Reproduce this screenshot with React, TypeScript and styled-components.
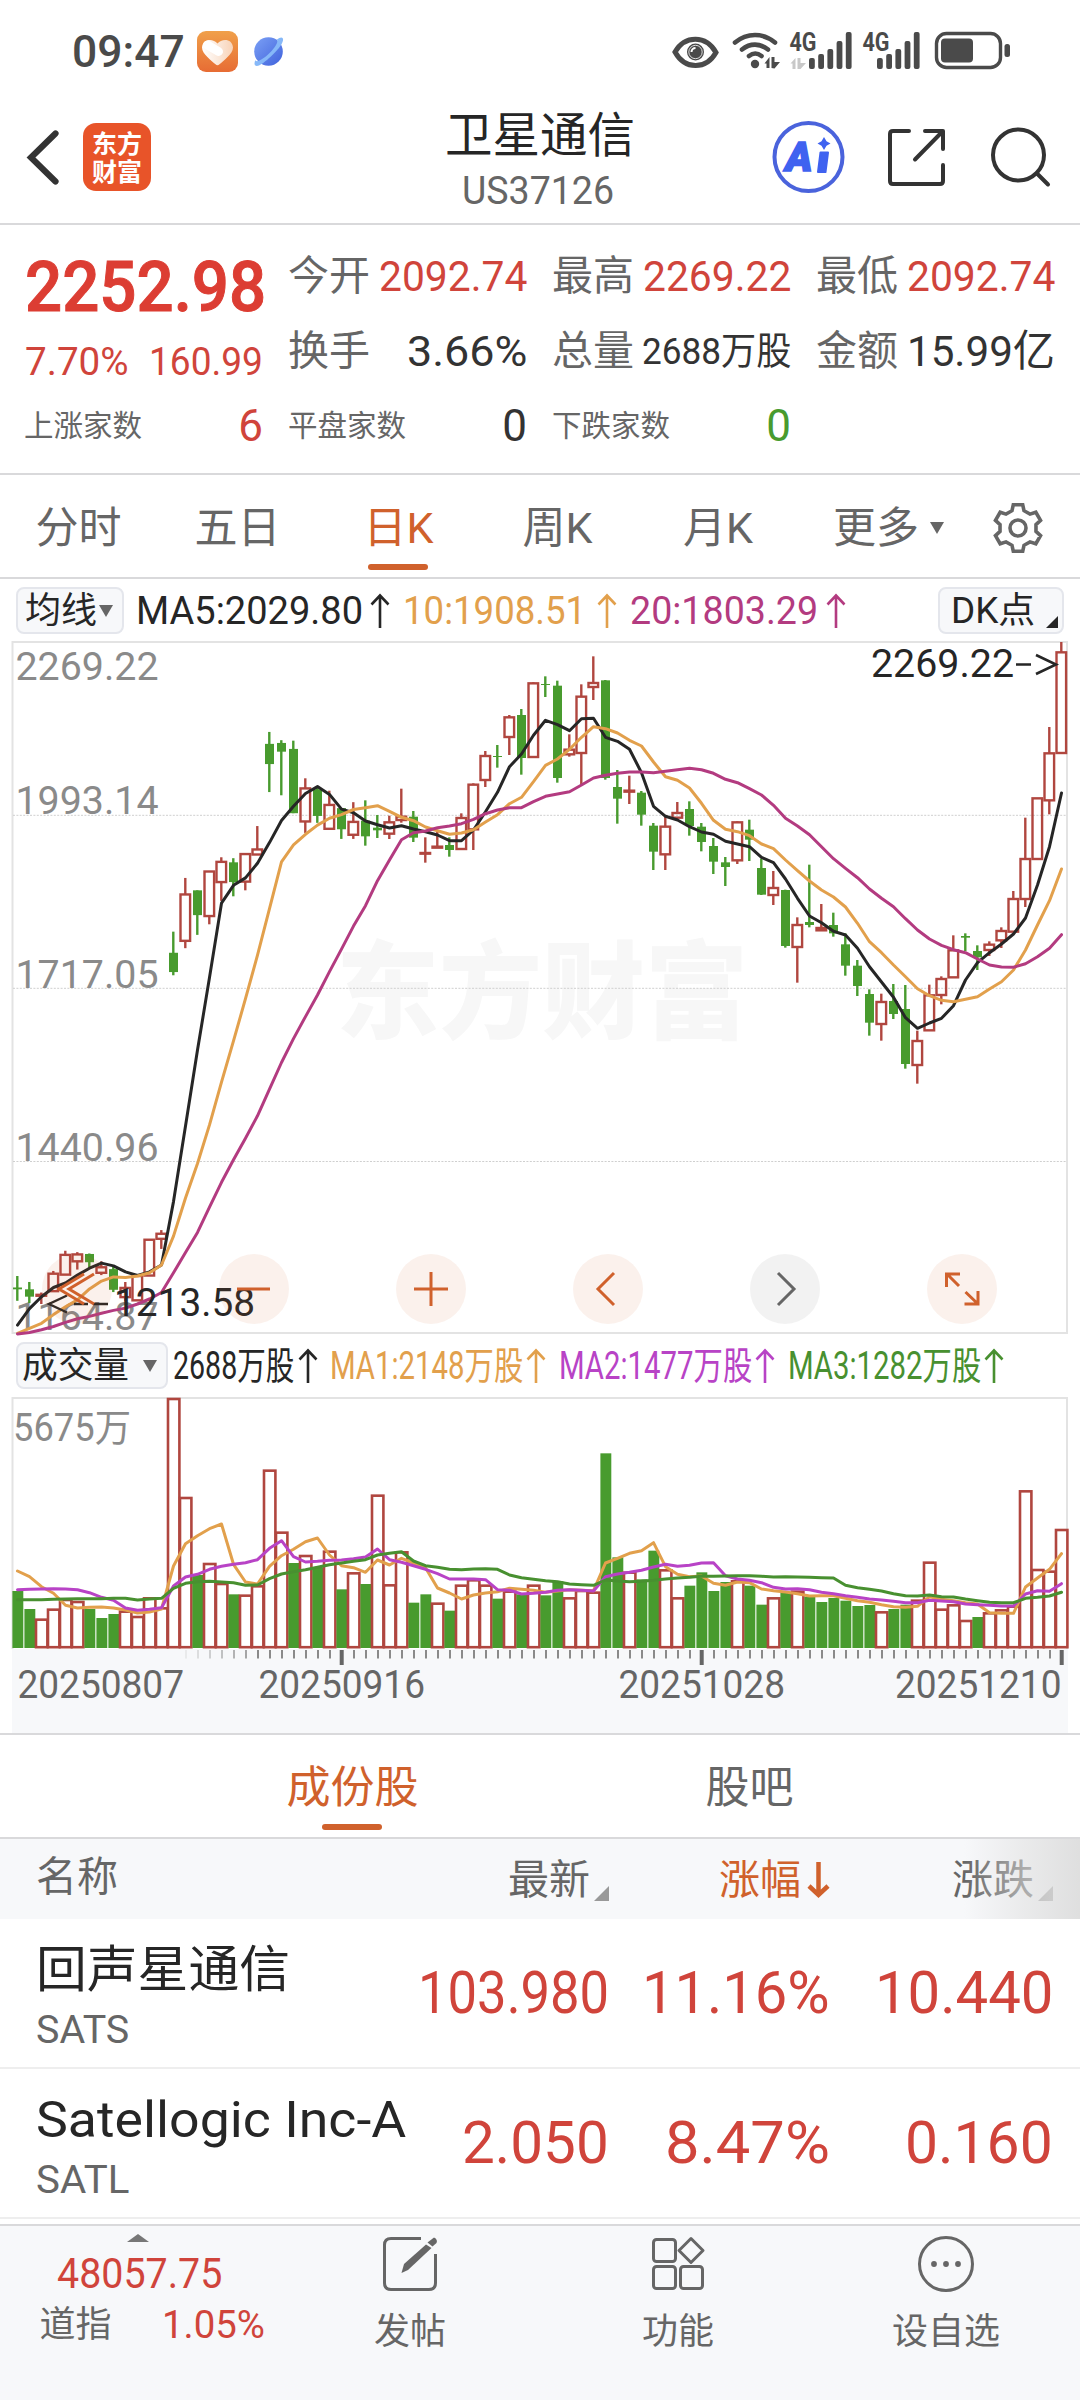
import React, { useLayoutEffect, useRef, useState } from "react";
import styled, { createGlobalStyle } from "styled-components";

const C = {
  ink: "#262626",
  sub: "#666666",
  label: "#8a8a8a",
  red: "#d0443b",
  price: "#dc3d33",
  accent: "#d0612c",
  line: "#d9d9db",
  panel: "#f7f8fa",
  up: "#b0463f",
  down: "#489b2e",
  ma5: "#262626",
  ma10: "#e2a04c",
  ma20: "#b33b80",
  vol2: "#b843c6",
  vol3: "#489030",
};

const FONT = `Roboto, "Noto Sans CJK SC", sans-serif`;

const Global = createGlobalStyle`
  * { box-sizing: border-box; }
  body { margin: 0; background: #fff; font-family: ${FONT}; color: ${C.ink}; }
`;

/* ---------- text that is squeezed or stretched to a known width ---------- */

const FitBox = styled.span<{ $w: number }>`
  display: block;
  flex: none;
  width: ${(p) => p.$w}px;
`;

const FitInner = styled.span`
  display: inline-block;
  white-space: nowrap;
  transform-origin: 0 50%;
`;

function Fit({ w, children }: { w: number; children: React.ReactNode }) {
  const ref = useRef<HTMLSpanElement>(null);
  const [k, setK] = useState(1);
  useLayoutEffect(() => {
    if (ref.current) setK(w / ref.current.offsetWidth);
  }, [w]);
  return (
    <FitBox $w={w}>
      <FitInner ref={ref} style={{ transform: `scaleX(${k})` }}>
        {children}
      </FitInner>
    </FitBox>
  );
}

/* ------------------------------- page shell ------------------------------ */

const Page = styled.div`
  width: 1080px;
  height: 2400px;
  display: flex;
  flex-direction: column;
  background: #fff;
  overflow: hidden;
`;

const StatusBar = styled.div`
  height: 103px;
  flex: none;
  display: flex;
  align-items: center;
  padding: 0 69px 0 72px;
  color: #4a4a4a;
`;

const Clock = styled.div`
  font-size: 44px;
  line-height: 104px;
  font-weight: 500;
  margin-right: 11px;
`;

const StatusIcons = styled.svg`
  display: block;
  margin-left: auto;
`;

const NavBar = styled.header`
  height: 122px;
  flex: none;
  display: grid;
  grid-template-columns: 1fr 240px 1fr;
  border-bottom: 2px solid ${C.line};
`;

const NavSide = styled.div<{ $right?: boolean }>`
  display: flex;
  align-items: center;
  height: 108px;
  justify-content: ${(p) => (p.$right ? "flex-end" : "flex-start")};
  padding: ${(p) => (p.$right ? "0 28px 0 0" : "0 0 0 24px")};
`;

const Logo = styled.div`
  width: 68px;
  height: 68px;
  margin-left: 20px;
  border-radius: 13px;
  background: #e85429;
  color: #fff;
  font-family: "Noto Sans CJK SC", sans-serif;
  font-weight: 700;
  font-size: 25px;
  line-height: 28px;
  text-align: center;
  padding-top: 5px;
`;

const NavTitle = styled.div`
  display: flex;
  flex-direction: column;
  align-items: center;
`;

const Title = styled.div`
  font-size: 47.5px;
  line-height: 60px;
  margin-top: 3px;
`;

const Code = styled.div`
  font-size: 38px;
  line-height: 44px;
  margin-top: 3px;
  margin-left: -4px;
  color: ${C.sub};
`;

/* ------------------------------ quote panel ------------------------------ */

const Quote = styled.section`
  height: 250px;
  flex: none;
  display: grid;
  grid-template-columns: repeat(4, 238px);
  grid-template-rows: repeat(3, 75px);
  column-gap: 26px;
  padding: 14px 25px 0;
  border-bottom: 2px solid ${C.line};
`;

const Headline = styled.div`
  grid-row: span 2;
  display: flex;
  flex-direction: column;
`;

const BigPrice = styled.div`
  height: 98px;
  line-height: 97px;
  font-size: 70px;
  font-weight: 500;
  -webkit-text-stroke: 1px ${C.price};
  color: ${C.price};
`;

const Change = styled.div`
  display: flex;
  justify-content: space-between;
  font-size: 39px;
  line-height: 53px;
  color: ${C.red};
`;

const Cell = styled.div`
  display: flex;
  justify-content: space-between;
  align-items: center;
  line-height: 75px;
`;

const CellLabel = styled.div<{ $small?: boolean }>`
  font-size: ${(p) => (p.$small ? 29.5 : 41)}px;
  margin-left: -1px;
  color: ${C.sub};
  white-space: nowrap;
`;

const CellValue = styled.div<{ $color?: string; $size?: number }>`
  font-size: ${(p) => p.$size ?? 43}px;
  color: ${(p) => p.$color ?? "#333"};
`;

/* ------------------------------- chart tabs ------------------------------ */

const PeriodTabs = styled.nav`
  height: 104px;
  flex: none;
  display: flex;
  border-bottom: 2px solid ${C.line};
`;

const Tab = styled.div<{ $active?: boolean; $w: number; $size?: number }>`
  position: relative;
  width: ${(p) => p.$w}px;
  display: flex;
  align-items: center;
  justify-content: center;
  padding-top: 3px;
  font-size: ${(p) => p.$size ?? 43}px;
  line-height: 98px;
  white-space: nowrap;
  color: ${(p) => (p.$active ? C.accent : C.sub)};
  &::after {
    content: "";
    display: ${(p) => (p.$active ? "block" : "none")};
    position: absolute;
    left: 50%;
    bottom: 7px;
    width: 60px;
    height: 6px;
    margin-left: -31px;
    border-radius: 3px;
    background: ${C.accent};
  }
`;

const Caret = styled.i<{ $w: number; $h: number; $gap: number }>`
  width: 0;
  height: 0;
  margin-left: ${(p) => p.$gap}px;
  border-left: ${(p) => p.$w / 2}px solid transparent;
  border-right: ${(p) => p.$w / 2}px solid transparent;
  border-top: ${(p) => p.$h}px solid ${C.sub};
`;

/* ---------------------------- indicator legends -------------------------- */

const Legend = styled.div<{ $h: number }>`
  height: ${(p) => p.$h}px;
  flex: none;
  display: flex;
  align-items: center;
  padding: 0 16px 0 16px;
`;

const Picker = styled.div<{ $w: number; $pad?: number }>`
  width: ${(p) => p.$w}px;
  height: 47px;
  flex: none;
  display: flex;
  align-items: center;
  padding-left: ${(p) => p.$pad ?? 7}px;
  font-size: 36px;
  line-height: 44px;
  border: 2px solid #e4e6ec;
  border-radius: 8px;
  background: ${C.panel};
`;

const DkPicker = styled(Picker)`
  position: relative;
  margin-left: auto;
  padding-left: 11px;
  &::after {
    content: "";
    position: absolute;
    right: 4px;
    bottom: 4px;
    border-left: 12px solid transparent;
    border-bottom: 12px solid ${C.ink};
  }
`;

const LegendItem = styled.div<{ $color: string; $gap: number }>`
  display: flex;
  align-items: center;
  margin-left: ${(p) => p.$gap}px;
  font-size: 38px;
  line-height: 50px;
  color: ${(p) => p.$color};
`;

const ArrowSvg = styled.svg`
  display: block;
  flex: none;
`;

function UpArrow({ color, gap }: { color: string; gap: number }) {
  return (
    <ArrowSvg width={20 + gap} height={36} viewBox={`${-gap} 0 ${20 + gap} 36`}>
      <path d="M10 35V3M1.5 11.5L10 2.5L18.5 11.5" fill="none" stroke={color} strokeWidth="2.6" />
    </ArrowSvg>
  );
}

/* --------------------------------- charts -------------------------------- */

const ChartBox = styled.div`
  position: relative;
  flex: none;
`;

const ChartSvg = styled.svg`
  display: block;
  overflow: visible;
`;

const Controls = styled.div`
  position: absolute;
  left: 42px;
  right: 83px;
  bottom: 10px;
  display: flex;
  justify-content: space-between;
`;

const RoundButton = styled.div<{ $muted?: boolean }>`
  width: 70px;
  height: 70px;
  border-radius: 50%;
  background: ${(p) => (p.$muted ? "rgba(90,90,90,.08)" : "rgba(208,97,44,.09)")};
`;

const cx = (i: number) => 17 + 12 * i;

/* [isUp, high, bodyTop, bodyBottom, low] measured downward in chart units */
type Candle = [number, number, number, number, number];

const early: Candle[] = [
  [0, 1407, 1432, 1436, 1461], [0, 1420, 1436, 1452, 1466], [1, 1443, 1448, 1450, 1468],
  [1, 1396, 1402, 1440, 1441], [1, 1352, 1361, 1404, 1405], [1, 1355, 1360, 1375, 1393],
  [0, 1358, 1359, 1377, 1390], [1, 1375, 1388, 1400, 1405], [0, 1385, 1392, 1437, 1442],
  [1, 1420, 1433, 1453, 1462], [1, 1405, 1407, 1460, 1461], [1, 1327, 1328, 1406, 1407],
  [1, 1307, 1315, 1326, 1348], [0, 657, 703, 745, 752], [1, 540, 576, 677, 693],
  [0, 567, 567, 621, 664], [1, 525, 526, 623, 641], [1, 495, 505, 549, 590],
  [0, 497, 506, 549, 580], [1, 487, 488, 548, 567], [1, 427, 478, 489, 490],
  [0, 222, 248, 292, 353], [0, 240, 246, 265, 360], [0, 241, 259, 399, 399],
  [1, 323, 345, 417, 442], [0, 342, 347, 405, 420], [1, 350, 381, 433, 434],
  [0, 388, 388, 434, 455], [1, 375, 418, 446, 455],
];

const later: Candle[] = [
  [0, 511, 572, 619, 647], [0, 555, 593, 601, 624], [1, 557, 577, 611, 627],
  [1, 476, 560, 570, 578], [0, 543, 560, 623, 636], [1, 622, 669, 671, 698],
  [1, 603, 650, 653, 655], [0, 622, 645, 660, 680], [1, 550, 564, 657, 658],
  [1, 460, 464, 598, 660], [1, 363, 378, 450, 471], [0, 345, 378, 381, 413],
  [1, 255, 262, 321, 375], [0, 237, 255, 384, 434], [1, 157, 160, 381, 382],
  [0, 139, 162, 165, 201], [0, 152, 167, 444, 458], [1, 313, 359, 373, 380],
  [1, 163, 200, 369, 464], [1, 79, 159, 171, 210], [0, 150, 151, 444, 449],
  [0, 420, 471, 506, 581], [1, 437, 482, 485, 522], [0, 483, 488, 554, 587],
  [0, 579, 587, 665, 720], [1, 560, 590, 673, 720], [1, 516, 549, 563, 567],
  [0, 514, 537, 588, 617], [0, 579, 590, 636, 664], [0, 624, 648, 695, 732],
  [0, 681, 697, 711, 768], [1, 574, 577, 691, 702], [0, 569, 599, 629, 693],
  [0, 686, 714, 794, 795], [1, 723, 774, 795, 825], [0, 779, 780, 948, 953],
  [1, 862, 885, 951, 1058], [0, 704, 876, 885, 892], [1, 822, 894, 901, 902],
  [0, 848, 885, 910, 920], [0, 910, 943, 1007, 1037], [0, 990, 1007, 1068, 1098],
  [0, 1078, 1092, 1178, 1217], [1, 1091, 1116, 1182, 1232], [0, 1062, 1113, 1152, 1167],
  [0, 1065, 1137, 1302, 1316], [1, 1202, 1233, 1305, 1361], [1, 1064, 1096, 1201, 1202],
  [1, 1039, 1047, 1095, 1123], [1, 916, 961, 1042, 1043], [0, 910, 918, 923, 963],
  [0, 946, 963, 982, 1020], [1, 934, 944, 960, 978], [1, 892, 903, 931, 954],
  [1, 783, 807, 905, 906], [1, 563, 687, 807, 831], [1, 503, 505, 687, 688],
  [1, 291, 370, 511, 553], [1, 36, 67, 369, 370],
];

const yOf = (v: number, i: number) => 630 + v / (i < early.length ? 2.178 : 3);

const candles = [...early, ...later];

const ma5 = [
  1514, 1478, 1452, 1432, 1422, 1405, 1390, 1379, 1385, 1398, 1406, 1398, 1383, 1245, 1080, 915, 757, 595, 556, 540,
  508, 463, 415, 384, 356, 341, 358, 390, 398, 573, 584, 594, 587, 597, 605, 615, 632, 632, 600, 545, 487, 410, 372,
  316, 271, 284, 302, 266, 265, 322, 334, 358, 428, 529, 559, 570, 590, 606, 613, 634, 642, 650, 682, 698, 747, 805,
  858, 878, 904, 915, 955, 1010, 1056, 1102, 1163, 1195, 1179, 1165, 1127, 1050, 998, 968, 942, 912, 864, 765, 650, 489,
];
const ma10 = [
  1532, 1521, 1510, 1491, 1474, 1459, 1435, 1418, 1409, 1410, 1407, 1400, 1383, 1320, 1237, 1162, 1078, 985, 895, 803,
  708, 607, 505, 468, 445, 425, 410, 402, 391, 533, 527, 544, 562, 572, 591, 602, 613, 609, 599, 576, 554, 521, 502,
  455, 406, 387, 358, 322, 290, 296, 309, 331, 348, 396, 440, 451, 474, 520, 571, 598, 605, 617, 642, 656, 690, 722,
  753, 780, 801, 831, 880, 935, 968, 1005, 1040, 1076, 1097, 1111, 1115, 1108, 1100, 1077, 1055, 1020, 960, 885, 812, 717,
];
const ma20 = [
  1533, 1530, 1524, 1517, 1508, 1500, 1495, 1488, 1482, 1477, 1468, 1457, 1443, 1400, 1356, 1312, 1257, 1203, 1154,
  1107, 1058, 1000, 942, 890, 842, 795, 744, 695, 645, 827, 752, 690, 629, 608, 603, 593, 588, 581, 568, 551, 540, 533,
  533, 515, 499, 492, 485, 465, 444, 436, 430, 426, 426, 428, 424, 419, 415, 419, 430, 448, 458, 476, 495, 526, 565,
  588, 614, 650, 686, 715, 743, 777, 805, 830, 866, 900, 927, 946, 959, 968, 987, 1005, 1011, 1012, 1001, 980, 955, 914,
];

const path = (values: number[], y: (v: number, i: number) => number) =>
  values.map((v, i) => `${i ? "L" : "M"}${(cx(i) + 0.5).toFixed(1)} ${y(v, i).toFixed(1)}`).join("");

const priceLabels: [string, number][] = [
  ["2269.22", 679.5],
  ["1993.14", 814],
  ["1717.05", 987.5],
  ["1440.96", 1161],
  ["1164.87", 1330],
];

function CandleMark({ c, i }: { c: Candle; i: number }) {
  const [up, h, t, b, l] = c;
  const [H, T, B, L] = [h, t, b, l].map((v) => yOf(v, i));
  const x = cx(i);
  if (up) {
    return (
      <g stroke={C.up} strokeWidth="2.4" fill="none">
        {T - H > 0.8 && <path d={`M${x + 0.3} ${H}V${T}`} />}
        {L - B > 0.8 && <path d={`M${x + 0.3} ${B}V${L}`} />}
        <rect x={x - 4.5} y={T} width="9.6" height={Math.max(B - T, 0.4)} />
      </g>
    );
  }
  return (
    <g fill={C.down}>
      <rect x={x - 0.9} y={H} width="2.4" height={L - H} />
      <rect x={x - 4} y={T} width="9" height={B - T} />
    </g>
  );
}

function PriceChart() {
  return (
    <ChartSvg width="1080" height="692" viewBox="0 642 1080 692" fontFamily={FONT} fontSize="39">
      <text
        x="336" y="1030" fontSize="106" fontWeight="900" fill="#f7f7f7"
        textLength="412" lengthAdjust="spacingAndGlyphs"
      >
        东方财富
      </text>
      <rect x="12.5" y="642" width="1054.5" height="691" fill="none" stroke="#e3e3e3" strokeWidth="2" />
      {[815.3, 988.3, 1161.5].map((y) => (
        <path key={y} d={`M13 ${y}H1067`} stroke="#cfcfcf" strokeWidth="1" strokeDasharray="2 1.4" />
      ))}
      {priceLabels.map(([t, y]) => (
        <text key={t} x="15.5" y={y} fill={C.label} textLength="143" lengthAdjust="spacingAndGlyphs">
          {t}
        </text>
      ))}
      {candles.map((c, i) => (
        <CandleMark key={i} c={c} i={i} />
      ))}
      <g fill="none" strokeWidth="3" strokeLinejoin="round" strokeLinecap="round">
        <path d={path(ma5, yOf)} stroke={C.ma5} />
        <path d={path(ma10, yOf)} stroke={C.ma10} />
        <path d={path(ma20, yOf)} stroke={C.ma20} />
      </g>
      <text x="871" y="677" fill={C.ink} textLength="143" lengthAdjust="spacingAndGlyphs">
        2269.22
      </text>
      <path d="M1016 664.5H1031M1036 655L1056 664.5L1036 674" fill="none" stroke={C.ink} strokeWidth="2.6" />
      <path d="M67 1295.5L49 1304L67 1312.5M74 1304H88M93 1304H108" fill="none" stroke={C.ink} strokeWidth="2.4" />
      <text x="114" y="1316" fill={C.ink} textLength="141" lengthAdjust="spacingAndGlyphs">
        1213.58
      </text>
    </ChartSvg>
  );
}

const glyphs = {
  first: "M42 20L17 35L42 50M52 20L27 35L52 50",
  minus: "M18 35H51",
  plus: "M18 35H52M35 18V52",
  prev: "M41 19L25 35L41 51",
  next: "M28 19L44 35L28 51",
  expand: "M19.500 33V20H33M20 20L32 32M51 37V50H37.500M51 50L38.500 38",
};

function ControlButton({ kind, muted }: { kind: keyof typeof glyphs; muted?: boolean }) {
  return (
    <RoundButton $muted={muted}>
      <ArrowSvg width="70" height="70" viewBox="0 0 70 70">
        <path d={glyphs[kind]} fill="none" stroke={muted ? C.sub : C.accent} strokeWidth="3" />
      </ArrowSvg>
    </RoundButton>
  );
}

/* negative entries are falling days */
const volumes = [
  -633, -687, 719, 689, 660, 666, -687, -714, -702, 695, 711, 655, 685, 57, 354, -585, 552, 612, -643, 647, 619, 272,
  458, -549, 528, -562, 515, -628, 580, -612, 347, 616, 517, -668, -643, 671, -692, 617, 601, 617, -656, 635, -643, 617,
  -646, -604, 655, 633, 638, -220, -532, 578, -598, -512, 571, 655, -617, -577, -633, -606, 604, -617, -674, 655, -637,
  635, -650, -666, -654, -662, -678, -675, 697, -687, -674, 662, 548, 689, 676, 723, -711, 700, 691, 680, 334, 570, 575,
  450,
];
const vma1 = [
  573, 590, 620, 640, 676, 684, 682, 681, 684, 690, 699, 696, 687, 558, 491, 467, 446, 432, 553, 606, 612, 559, 527,
  508, 485, 474, 525, 557, 563, 577, 540, 555, 535, 549, 563, 624, 639, 657, 645, 639, 635, 625, 628, 631, 637, 633,
  629, 631, 632, 549, 535, 520, 512, 488, 560, 583, 590, 588, 610, 616, 606, 608, 627, 632, 636, 641, 648, 647, 647,
  655, 662, 667, 674, 680, 682, 679, 650, 658, 662, 668, 672, 698, 700, 700, 621, 594, 568, 521,
];
const vma2 = [
  629, 628, 627, 626, 627, 629, 638, 652, 661, 684, 691, 688, 683, 618, 591, 583, 568, 559, 553, 548, 539, 505, 482,
  530, 546, 544, 541, 540, 536, 531, 507, 539, 547, 557, 568, 581, 597, 597, 597, 599, 629, 631, 642, 640, 637, 631,
  629, 631, 633, 590, 582, 577, 571, 561, 553, 559, 556, 549, 548, 587, 597, 601, 608, 622, 627, 626, 629, 637, 641,
  647, 652, 657, 660, 664, 668, 668, 661, 663, 665, 672, 674, 676, 678, 678, 642, 632, 634, 611,
];
const vma3 = [
  659, 659, 659, 658, 657, 656, 656, 656, 655, 655, 660, 657, 655, 625, 610, 605, 604, 606, 608, 616, 615, 596, 582,
  575, 569, 562, 554, 549, 544, 539, 525, 520, 515, 543, 557, 562, 568, 569, 567, 566, 568, 585, 593, 598, 602, 605,
  612, 614, 616, 600, 603, 605, 604, 601, 597, 594, 592, 589, 589, 588, 587, 587, 589, 591, 590, 591, 592, 593, 594,
  616, 623, 628, 633, 641, 647, 648, 645, 650, 651, 657, 662, 667, 668, 668, 655, 652, 648, 637,
];

const vy = (v: number) => 1380 + Math.abs(v) / 3;
const VOL_BASE = 1648;
const dates: [string, number][] = [
  ["20250807", 17.5],
  ["20250916", 258.5],
  ["20251028", 618.5],
  ["20251210", 895],
];

function VolumeChart() {
  return (
    <ChartSvg width="1080" height="336" viewBox="0 1397 1080 336" fontFamily={FONT} fontSize="38">
      <rect x="12" y="1649" width="1056" height="84" fill={C.panel} />
      <path d="M12.500 1649V1398H1067V1649" fill="none" stroke="#e3e3e3" strokeWidth="2" />
      <text x="13" y="1440.500" fill={C.label} textLength="118" lengthAdjust="spacingAndGlyphs">
        5675万
      </text>
      {volumes.map((v, i) =>
        v < 0 ? (
          <rect key={i} x={cx(i) - 4.6} y={vy(v)} width="10.9" height={VOL_BASE - vy(v)} fill={C.down} />
        ) : (
          <rect
            key={i} x={cx(i) - 5} y={vy(v)} width="11.4" height={VOL_BASE - 0.8 - vy(v)}
            fill="#fff" stroke={C.up} strokeWidth="2.6"
          />
        ),
      )}
      <g fill="none" strokeWidth="3" strokeLinejoin="round" strokeLinecap="round">
        <path d={path(vma1, vy)} stroke={C.ma10} />
        <path d={path(vma2, vy)} stroke={C.vol2} />
        <path d={path(vma3, vy)} stroke={C.vol3} />
      </g>
      {Array.from({ length: 74 }, (_, k) => k + 14).map((i) => {
        const major = i === 27 || i === 57 || i === 87;
        return (
          <rect
            key={i} x={cx(i) + (major ? -1.300 : 0)} y="1650" width={major ? 4 : 2} height={major ? 15 : 8.500}
            fill={major ? C.sub : "#8a8a8a"} opacity={i < 20 ? (i - 13) / 8 : 1}
          />
        );
      })}
      {dates.map(([t, x]) => (
        <text key={t} x={x} y="1697.500" fill={C.sub} textLength="166.500" lengthAdjust="spacingAndGlyphs">
          {t}
        </text>
      ))}
    </ChartSvg>
  );
}

/* ----------------------------- constituents ------------------------------ */

const ListTabs = styled.nav`
  height: 106px;
  flex: none;
  display: flex;
  padding-left: 154px;
  border-top: 2px solid ${C.line};
  border-bottom: 2px solid ${C.line};
`;

const TableHead = styled.div`
  position: relative;
  height: 80px;
  flex: none;
  display: grid;
  grid-template-columns: 362px 247px 221px 223px;
  background: ${C.panel};
  font-size: 41px;
  line-height: 76px;
  color: ${C.sub};
  &::after {
    content: "";
    position: absolute;
    right: 0;
    top: 0;
    width: 116px;
    height: 80px;
    background: linear-gradient(to right, rgba(224, 224, 224, 0), rgba(224, 224, 224, 0.55) 50%, rgba(220, 220, 220, 0.9));
  }
`;

const HeadCell = styled.div<{ $first?: boolean; $active?: boolean }>`
  display: flex;
  align-items: center;
  justify-content: ${(p) => (p.$first ? "flex-start" : "flex-end")};
  padding-left: ${(p) => (p.$first ? 36 : 0)}px;
  padding-bottom: ${(p) => (p.$first ? 6 : 0)}px;
  color: ${(p) => (p.$active ? C.accent : C.sub)};
`;

const Corner = styled.i`
  align-self: flex-end;
  margin: 0 0 20px 4px;
  border-left: 15px solid transparent;
  border-bottom: 15px solid #999;
`;

const StockRow = styled.div`
  height: 150px;
  flex: none;
  display: grid;
  grid-template-columns: 412px 197px 221px 223px;
  align-items: center;
  border-bottom: 2px solid #eeeeee;
`;

const StockName = styled.div`
  padding: 8px 0 0 36px;
  font-size: 50px;
  line-height: 62px;
`;

const Ticker = styled.div`
  font-size: 39px;
  line-height: 52px;
  margin-top: 3px;
  color: ${C.sub};
`;

const Num = styled.div`
  display: flex;
  justify-content: flex-end;
  font-size: 60px;
  line-height: 148px;
  color: ${C.red};
`;

const stocks = [
  { name: "回声星通信", nameW: 254, code: "SATS", values: [["103.980", 191], ["11.16%", 188], ["10.440", 178]] },
  { name: "Satellogic Inc-A", nameW: 370, code: "SATL", values: [["2.050", 147], ["8.47%", 165], ["0.160", 148]] },
] as const;

/* --------------------------------- footer -------------------------------- */

const Footer = styled.footer`
  height: 176px;
  margin-top: 5px;
  flex: none;
  display: grid;
  grid-template-columns: 276px repeat(3, 268px);
  background: ${C.panel};
  border-top: 2px solid ${C.line};
`;

const IndexBox = styled.div`
  display: flex;
  flex-direction: column;
  align-items: center;
  padding-top: 8px;
`;

const UpCaret = styled.i`
  border-left: 11px solid transparent;
  border-right: 11px solid transparent;
  border-bottom: 8px solid #777;
`;

const IndexValue = styled.div`
  margin: 9px 0 0 2px;
  font-size: 42px;
  line-height: 46px;
  color: ${C.red};
`;

const IndexRow = styled.div`
  display: flex;
  gap: 50px;
  margin: 5px 0 0 28px;
  font-size: 36px;
  line-height: 46px;
  color: ${C.sub};
`;

const IndexPct = styled.div`
  font-size: 38px;
  color: ${C.red};
`;

const Action = styled.div`
  display: flex;
  flex-direction: column;
  align-items: center;
  padding-top: 9px;
  font-size: 36px;
  line-height: 50px;
  color: ${C.sub};
`;

const ActionIcon = styled.svg`
  display: block;
  margin-bottom: 14px;
`;

/* --------------------------------- icons --------------------------------- */

const AppBadges = () => (
  <svg width="90" height="44" viewBox="196 30 90 44">
    <defs>
      <linearGradient id="badge" x1="0" y1="0" x2="0" y2="1">
        <stop offset="0" stopColor="#f0a04a" />
        <stop offset="1" stopColor="#e76c34" />
      </linearGradient>
      <linearGradient id="planet" x1="0" y1="0" x2="1" y2="1">
        <stop offset="0" stopColor="#7ba0f5" />
        <stop offset="1" stopColor="#4062dc" />
      </linearGradient>
      <linearGradient id="heart" x1="0" y1="0" x2="1" y2="0">
        <stop offset="0" stopColor="#fff" />
        <stop offset="1" stopColor="#f8d3b8" />
      </linearGradient>
    </defs>
    <rect x="197" y="31" width="41" height="41" rx="9" fill="url(#badge)" />
    <path
      d="M217.500 43.500C213 38 202.500 38.500 202 47.500C202 54 212 61 215.500 64.300Q217.500 66 219.500 64.300C223 61 233 54 233 47.500C232.500 38.500 222 38 217.500 43.500Z"
      fill="url(#heart)"
    />
    <path d="M207.500 45L218.500 51.500" stroke="#fff" strokeWidth="9" strokeLinecap="round" />
    <circle cx="268.500" cy="51.500" r="14.300" fill="url(#planet)" />
    <path
      d="M277 39.500C281 36 284.500 37 282.500 42C280 49 266 62 259 65.500C254.500 67 253.500 64 255.500 60C256 63 262 60 268 54.500C274 49 278.500 43 277 39.500Z"
      fill="#86b8f8"
    />
  </svg>
);

const bars = [[58, 11], [54, 15], [49, 20], [41, 28], [32, 37]];

const StatusGlyphs = () => (
  <StatusIcons width="340" height="64" viewBox="670 20 340 64">
    <g fill="none" stroke="#4a4a4a" strokeLinecap="round">
      <path d="M674 52C684 35 705 35 715 52.500C705 70 684 70 674 52Z" strokeWidth="5" />
      <path d="M734 42.500C746 32.500 762 32.500 774 42.500" strokeWidth="4.600" />
      <path d="M741 49.500C749 43 759 43 767 49.500" strokeWidth="4.600" />
      <path d="M748 56C752 52.800 756.500 52.800 760.500 56" strokeWidth="4.600" />
    </g>
    <circle cx="694.500" cy="52" r="8.500" fill="#4a4a4a" />
    <circle cx="694.500" cy="52" r="6.700" fill="none" stroke="#fff" strokeWidth=".8" />
    <path d="M690.500 52A4 4 0 0 1 694.500 48" fill="none" stroke="#fff" strokeWidth="2" />
    <circle cx="754" cy="64" r="4.200" fill="#4a4a4a" />
    <path d="M763.500 63.500L768.500 57V68H765.500V63.500ZM779 62L773.500 68.500L770.500 68V57H773.500V62Z" fill="#4a4a4a" />
    <path d="M789.500 63.500L794.500 58V69H791.500V63.500ZM805 63L799.500 69L796.500 69V58H799.500V63Z" fill="#c8c8c8" />
    {[808, 876].map((x0) => (
      <g key={x0} fill="#4a4a4a">
        {bars.map(([y, h], i) => (
          <rect key={i} x={x0 + i * 9.200} y={y} width="5.800" height={h} rx="2" />
        ))}
      </g>
    ))}
    {[788.5, 861.5].map((x) => (
      <text
        key={x} x={x} y="51" fontFamily={FONT} fontWeight="700" fontSize="26" fill="#4a4a4a"
        textLength="27" lengthAdjust="spacingAndGlyphs"
      >
        4G
      </text>
    ))}
    <rect x="935.500" y="33.500" width="64" height="34" rx="10" fill="none" stroke="#4a4a4a" strokeWidth="3.400" />
    <rect x="940" y="38.500" width="32" height="24" rx="4" fill="#4a4a4a" />
    <rect x="1003.500" y="44" width="5.500" height="13" rx="2.500" fill="#4a4a4a" />
  </StatusIcons>
);

const BackIcon = () => (
  <svg width="39" height="60" viewBox="24 127 39 60">
    <path d="M55.500 133.500L31 157.500L55.500 181.500" fill="none" stroke="#333" strokeWidth="6.200" strokeLinecap="round" />
  </svg>
);

const NavIcons = () => (
  <svg width="282" height="76" viewBox="770 119 282 76">
    <circle cx="808.500" cy="157" r="34" fill="none" stroke="#4a63dc" strokeWidth="4" />
    <text
      x="785.500" y="170.500" fontFamily={FONT} fontWeight="900" fontStyle="italic" fontSize="41" fill="#3f62f0"
      stroke="#3f62f0" strokeWidth="1.600" textLength="27" lengthAdjust="spacingAndGlyphs"
    >
      A
    </text>
    <path d="M820.500 152.500H828L825.500 172H818Z" fill="#3f62f0" stroke="#3f62f0" strokeWidth="2" strokeLinejoin="round" />
    <path d="M824 137L826.500 141.300L830.500 143.500L826.500 145.700L824 150L821.500 145.700L817.500 143.500L821.500 141.300Z" fill="#3f62f0" />
    <g fill="none" stroke="#333" strokeWidth="4" strokeLinecap="round" strokeLinejoin="round">
      <path d="M909 131H893Q890 131 890 134V181Q890 184 893 184H940Q943 184 943 181V165" />
      <path d="M925 131H943V149M942 132L915 159.500" />
      <circle cx="1018.500" cy="155" r="25.500" />
      <path d="M1037 173.500L1048 184.500" />
    </g>
  </svg>
);

const gearTooth: [number, number][] = [[-6, -17.3], [-4.7, -23.3], [4.7, -23.3], [6, -17.3]];
const gearPoints = Array.from({ length: 6 }, (_, k) => (k * Math.PI) / 3)
  .flatMap((a) =>
    gearTooth.map(([x, y]) => [x * Math.cos(a) - y * Math.sin(a), x * Math.sin(a) + y * Math.cos(a)]),
  )
  .map(([x, y]) => `${x.toFixed(2)},${y.toFixed(2)}`)
  .join(" ");

const GearIcon = () => (
  <svg width="54" height="54" viewBox="-27 -27 54 54">
    <polygon points={gearPoints} fill="none" stroke="#666" strokeWidth="3.600" />
    <circle r="8" fill="none" stroke="#666" strokeWidth="3.600" />
  </svg>
);

const SortArrow = () => (
  <ArrowSvg width="29" height="38" viewBox="-5 0 29 38">
    <path d="M12.500 1V33M3 25L12.500 34L22 25" fill="none" stroke={C.accent} strokeWidth="4.500" />
  </ArrowSvg>
);

const PostIcon = () => (
  <ActionIcon width="58" height="58" viewBox="381 2235 58 58">
    <path d="M421 2238.500H391Q384.500 2238.500 384.500 2245V2283Q384.500 2289.500 391 2289.500H429Q435.500 2289.500 435.500 2283V2254" fill="none" stroke="#666" strokeWidth="3" />
    <path d="M401.500 2273L404 2264L426 2244.500L431.500 2248L408 2270Z" fill="#666" />
    <path d="M427.500 2242.500L434 2237.500Q438 2239.500 436.500 2243L432.500 2246.500Z" fill="#666" />
  </ActionIcon>
);

const GridIcon = () => (
  <ActionIcon width="58" height="58" viewBox="649.500 2235 58 58">
    <g fill="none" stroke="#666" strokeWidth="3">
      <rect x="654" y="2239.500" width="22" height="22" rx="3" />
      <rect x="654" y="2266.500" width="22" height="22" rx="3" />
      <rect x="681" y="2266.500" width="22" height="22" rx="3" />
      <path d="M691.500 2238.500L703.500 2250.500L691.500 2262.500L679.500 2250.500Z" strokeLinejoin="round" />
    </g>
  </ActionIcon>
);

const MoreIcon = () => (
  <ActionIcon width="58" height="58" viewBox="-29 -29 58 58">
    <circle r="26.500" fill="none" stroke="#666" strokeWidth="3" />
    <circle cx="-12" r="2.900" fill="#666" />
    <circle r="2.900" fill="#666" />
    <circle cx="12" r="2.900" fill="#666" />
  </ActionIcon>
);

/* ---------------------------------- app ---------------------------------- */

export default function App() {
  return (
    <Page>
      <Global />
      <StatusBar>
        <Clock><Fit w={113}>09:47</Fit></Clock>
        <AppBadges />
        <StatusGlyphs />
      </StatusBar>

      <NavBar>
        <NavSide>
          <BackIcon />
          <Logo>东方<br />财富</Logo>
        </NavSide>
        <NavTitle>
          <Title>卫星通信</Title>
          <Code><Fit w={152}>US37126</Fit></Code>
        </NavTitle>
        <NavSide $right><NavIcons /></NavSide>
      </NavBar>

      <Quote>
        <Headline>
          <BigPrice><Fit w={241}>2252.98</Fit></BigPrice>
          <Change>
            <Fit w={104}>7.70%</Fit>
            <Fit w={114}>160.99</Fit>
          </Change>
        </Headline>
        <Cell>
          <CellLabel>今开</CellLabel>
          <CellValue $color={C.red}><Fit w={148}>2092.74</Fit></CellValue>
        </Cell>
        <Cell>
          <CellLabel>最高</CellLabel>
          <CellValue $color={C.red}><Fit w={148}>2269.22</Fit></CellValue>
        </Cell>
        <Cell>
          <CellLabel>最低</CellLabel>
          <CellValue $color={C.red}><Fit w={148}>2092.74</Fit></CellValue>
        </Cell>
        <Cell>
          <CellLabel>换手</CellLabel>
          <CellValue><Fit w={120}>3.66%</Fit></CellValue>
        </Cell>
        <Cell>
          <CellLabel>总量</CellLabel>
          <CellValue $size={37.5}><Fit w={149}>2688万股</Fit></CellValue>
        </Cell>
        <Cell>
          <CellLabel>金额</CellLabel>
          <CellValue><Fit w={148}>15.99亿</Fit></CellValue>
        </Cell>
        <Cell>
          <CellLabel $small>上涨家数</CellLabel>
          <CellValue $color={C.red} $size={44}>6</CellValue>
        </Cell>
        <Cell>
          <CellLabel $small>平盘家数</CellLabel>
          <CellValue $size={44}>0</CellValue>
        </Cell>
        <Cell>
          <CellLabel $small>下跌家数</CellLabel>
          <CellValue $color={C.down} $size={44}>0</CellValue>
        </Cell>
      </Quote>

      <PeriodTabs>
        <Tab $w={157}>分时</Tab>
        <Tab $w={161}>五日</Tab>
        <Tab $w={161} $active>日K</Tab>
        <Tab $w={157}>周K</Tab>
        <Tab $w={164}>月K</Tab>
        <Tab $w={177}>更多<Caret $w={15} $h={12} $gap={11} /></Tab>
        <Tab $w={82}><GearIcon /></Tab>
      </PeriodTabs>

      <Legend $h={63}>
        <Picker $w={108}>均线<Caret $w={15} $h={12} $gap={2} /></Picker>
        <LegendItem $color={C.ink} $gap={12}>
          <Fit w={227}>MA5:2029.80</Fit><UpArrow color={C.ink} gap={7} />
        </LegendItem>
        <LegendItem $color={C.ma10} $gap={13}>
          <Fit w={183}>10:1908.51</Fit><UpArrow color={C.ma10} gap={11} />
        </LegendItem>
        <LegendItem $color={C.ma20} $gap={13}>
          <Fit w={188}>20:1803.29</Fit><UpArrow color={C.ma20} gap={8} />
        </LegendItem>
        <DkPicker $w={126}><Fit w={84}>DK点</Fit></DkPicker>
      </Legend>

      <ChartBox>
        <PriceChart />
        <Controls>
          <ControlButton kind="first" />
          <ControlButton kind="minus" />
          <ControlButton kind="plus" />
          <ControlButton kind="prev" />
          <ControlButton kind="next" muted />
          <ControlButton kind="expand" />
        </Controls>
      </ChartBox>

      <Legend $h={63}>
        <Picker $w={152} $pad={4}><Fit w={107}>成交量</Fit><Caret $w={15} $h={12} $gap={14} /></Picker>
        <LegendItem $color={C.ink} $gap={5}>
          <Fit w={121}>2688万股</Fit><UpArrow color={C.ink} gap={4} />
        </LegendItem>
        <LegendItem $color={C.ma10} $gap={12}>
          <Fit w={193}>MA1:2148万股</Fit><UpArrow color={C.ma10} gap={3} />
        </LegendItem>
        <LegendItem $color={C.vol2} $gap={13}>
          <Fit w={193}>MA2:1477万股</Fit><UpArrow color={C.vol2} gap={3} />
        </LegendItem>
        <LegendItem $color={C.vol3} $gap={13}>
          <Fit w={193}>MA3:1282万股</Fit><UpArrow color={C.vol3} gap={3} />
        </LegendItem>
      </Legend>

      <ChartBox><VolumeChart /></ChartBox>

      <ListTabs>
        <Tab $w={397} $active $size={44}>成份股</Tab>
        <Tab $w={397} $size={44}>股吧</Tab>
      </ListTabs>

      <TableHead>
        <HeadCell $first>名称</HeadCell>
        <HeadCell>最新<Corner /></HeadCell>
        <HeadCell $active>涨幅<SortArrow /></HeadCell>
        <HeadCell>涨跌<Corner /></HeadCell>
      </TableHead>

      {stocks.map((s) => (
        <StockRow key={s.code}>
          <StockName>
            <Fit w={s.nameW}>{s.name}</Fit>
            <Ticker><Fit w={93}>{s.code}</Fit></Ticker>
          </StockName>
          {s.values.map(([v, w]) => (
            <Num key={v}><Fit w={w}>{v}</Fit></Num>
          ))}
        </StockRow>
      ))}

      <Footer>
        <IndexBox>
          <UpCaret />
          <IndexValue><Fit w={165}>48057.75</Fit></IndexValue>
          <IndexRow>
            道指
            <IndexPct><Fit w={103}>1.05%</Fit></IndexPct>
          </IndexRow>
        </IndexBox>
        <Action><PostIcon />发帖</Action>
        <Action><GridIcon />功能</Action>
        <Action><MoreIcon />设自选</Action>
      </Footer>
    </Page>
  );
}
